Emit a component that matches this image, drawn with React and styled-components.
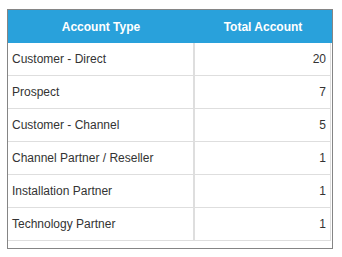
import styled, { createGlobalStyle } from 'styled-components';

const rows = [
  { type: 'Customer - Direct', total: 20 },
  { type: 'Prospect', total: 7 },
  { type: 'Customer - Channel', total: 5 },
  { type: 'Channel Partner / Reseller', total: 1 },
  { type: 'Installation Partner', total: 1 },
  { type: 'Technology Partner', total: 1 },
];

export default function App() {
  return (
    <Page>
      <GlobalStyle />
      <Panel>
        <Table>
          <HeadCell>Account Type</HeadCell>
          <HeadCell>Total Account</HeadCell>
          {rows.map((r) => (
            <Row key={r.type}>
              <TypeCell>{r.type}</TypeCell>
              <TotalCell>{r.total}</TotalCell>
            </Row>
          ))}
        </Table>
      </Panel>
    </Page>
  );
}

const GlobalStyle = createGlobalStyle`
  body {
    margin: 0;
    background: #fff;
    font-family: "Liberation Sans", Arial, sans-serif;
  }
`;

const Page = styled.div`
  padding: 9px 0 0 7px;
`;

const Panel = styled.div`
  width: 326px;
  box-sizing: border-box;
  border: 1px solid #858585;
  padding-bottom: 7px;
`;

const Table = styled.div`
  display: grid;
  grid-template-columns: 186px 1fr;
`;

const HeadCell = styled.div`
  height: 33px;
  background-color: #29a1db;
  color: #fff;
  font-size: 12px;
  font-weight: bold;
  display: flex;
  align-items: center;
  justify-content: center;
`;

const Row = styled.div`
  display: contents;
`;

const Cell = styled.div`
  height: 32px;
  border-bottom: 1px solid #dedede;
  font-size: 12px;
  color: #333;
  display: flex;
  align-items: center;
`;

const TypeCell = styled(Cell)`
  padding-left: 4px;
  border-right: 1px solid #dedede;
`;

const TotalCell = styled(Cell)`
  justify-content: flex-end;
  padding-right: 4px;
  border-left: 1px solid #dedede;
  border-right: 1px solid #dedede;
  margin-right: 1px;
`;
